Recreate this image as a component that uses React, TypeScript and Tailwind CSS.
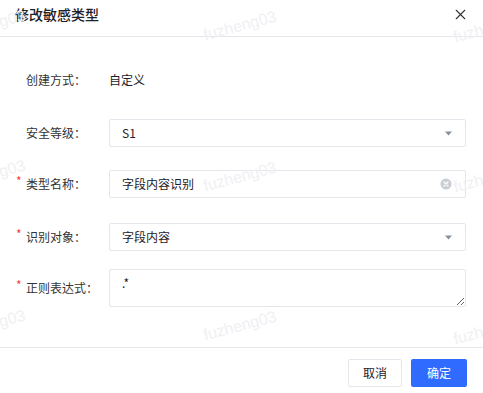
import { X } from 'lucide-react';

const FONT = '"Noto Sans CJK SC", "Noto Sans", "Liberation Sans", sans-serif';

const watermarks = [
  { x: -11, y: 25 },
  { x: 240, y: 26 },
  { x: 490, y: 28 },
  { x: -11, y: 175 },
  { x: 240, y: 177 },
  { x: 490, y: 178 },
  { x: -11, y: 325 },
  { x: 240, y: 326 },
  { x: 490, y: 330 },
];

function Watermarks() {
  return (
    <div className="pointer-events-none absolute inset-0 overflow-hidden">
      {watermarks.map((w, i) => (
        <div
          key={i}
          className="absolute w-[90px] text-center text-[16px] leading-[20px] text-[#f0f0f3] -rotate-[15deg]"
          style={{ left: w.x - 45, top: w.y - 10, fontFamily: '"Liberation Sans", Arial, sans-serif' }}
        >
          fuzheng03
        </div>
      ))}
    </div>
  );
}

function Label({ text, required }: { text: string; required?: boolean }) {
  return (
    <div className="flex w-[93px] shrink-0 items-center">
      <span className="w-[10px] self-start pt-[1px] text-[12px] leading-[10px] text-[#f53f3f]">{required ? '*' : ''}</span>
      <span className="text-[12px] text-[#333]">{text}</span>
    </div>
  );
}

function Caret() {
  return (
    <svg width="7" height="5" viewBox="0 0 7 5" className="shrink-0">
      <polygon points="0,0.5 7,0.5 3.5,4.5" fill="#86909c" />
    </svg>
  );
}

function ClearIcon() {
  return (
    <svg width="12" height="12" viewBox="0 0 12 12" className="shrink-0">
      <circle cx="6" cy="6" r="5.5" fill="#c9cdd4" />
      <path d="M4 4 L8 8 M8 4 L4 8" stroke="#fff" strokeWidth="1.3" strokeLinecap="round" />
    </svg>
  );
}

function Field({ value, right }: { value: string; right: React.ReactNode }) {
  return (
    <div className="flex h-[28px] flex-1 items-center justify-between rounded-[2px] border border-[#e5e6eb] bg-white pl-[12px] pr-[13px]">
      <span className="text-[12px] text-[#1d2129]">{value}</span>
      {right}
    </div>
  );
}

export default function App() {
  return (
    <div className="relative flex h-[393px] w-[483px] flex-col bg-white" style={{ fontFamily: FONT }}>
      <div className="flex h-[37px] shrink-0 items-center justify-between border-b border-[#e5e6eb] pl-[15px] pr-[14px] pb-[8px]">
        <span className="text-[14px] font-medium text-[#1d2129]">修改敏感类型</span>
        <X className="h-[17px] w-[17px] text-[#333]" strokeWidth={1.6} />
      </div>

      <div className="flex flex-1 flex-col pl-[16px] pr-[17px] pt-[29px]">
        <div className="flex h-[28px] items-center">
          <Label text="创建方式：" />
          <span className="text-[12px] text-[#1d2129]">自定义</span>
        </div>
        <div className="mt-[25px] flex items-center">
          <Label text="安全等级：" />
          <Field value="S1" right={<Caret />} />
        </div>
        <div className="mt-[23px] flex items-center">
          <Label text="类型名称：" required />
          <Field value="字段内容识别" right={<ClearIcon />} />
        </div>
        <div className="mt-[25px] flex items-center">
          <Label text="识别对象：" required />
          <Field value="字段内容" right={<Caret />} />
        </div>
        <div className="mt-[18px] flex items-center">
          <Label text="正则表达式：" required />
          <textarea
            defaultValue=".*"
            className="h-[38px] flex-1 rounded-[2px] border border-[#e5e6eb] px-[12px] py-[4px] text-[12px] leading-[18px] text-[#1d2129] outline-none"
          />
        </div>
      </div>

      <div className="flex h-[46px] shrink-0 items-start justify-end gap-[9px] border-t border-[#e5e6eb] pr-[16px] pt-[11px]">
        <button className="h-[28px] w-[54px] rounded-[2px] border border-[#e5e6eb] bg-white text-[12px] text-[#1d2129]">取消</button>
        <button className="h-[28px] w-[56px] rounded-[2px] bg-[#2f6bff] text-[12px] text-white">确定</button>
      </div>

      <Watermarks />
    </div>
  );
}
